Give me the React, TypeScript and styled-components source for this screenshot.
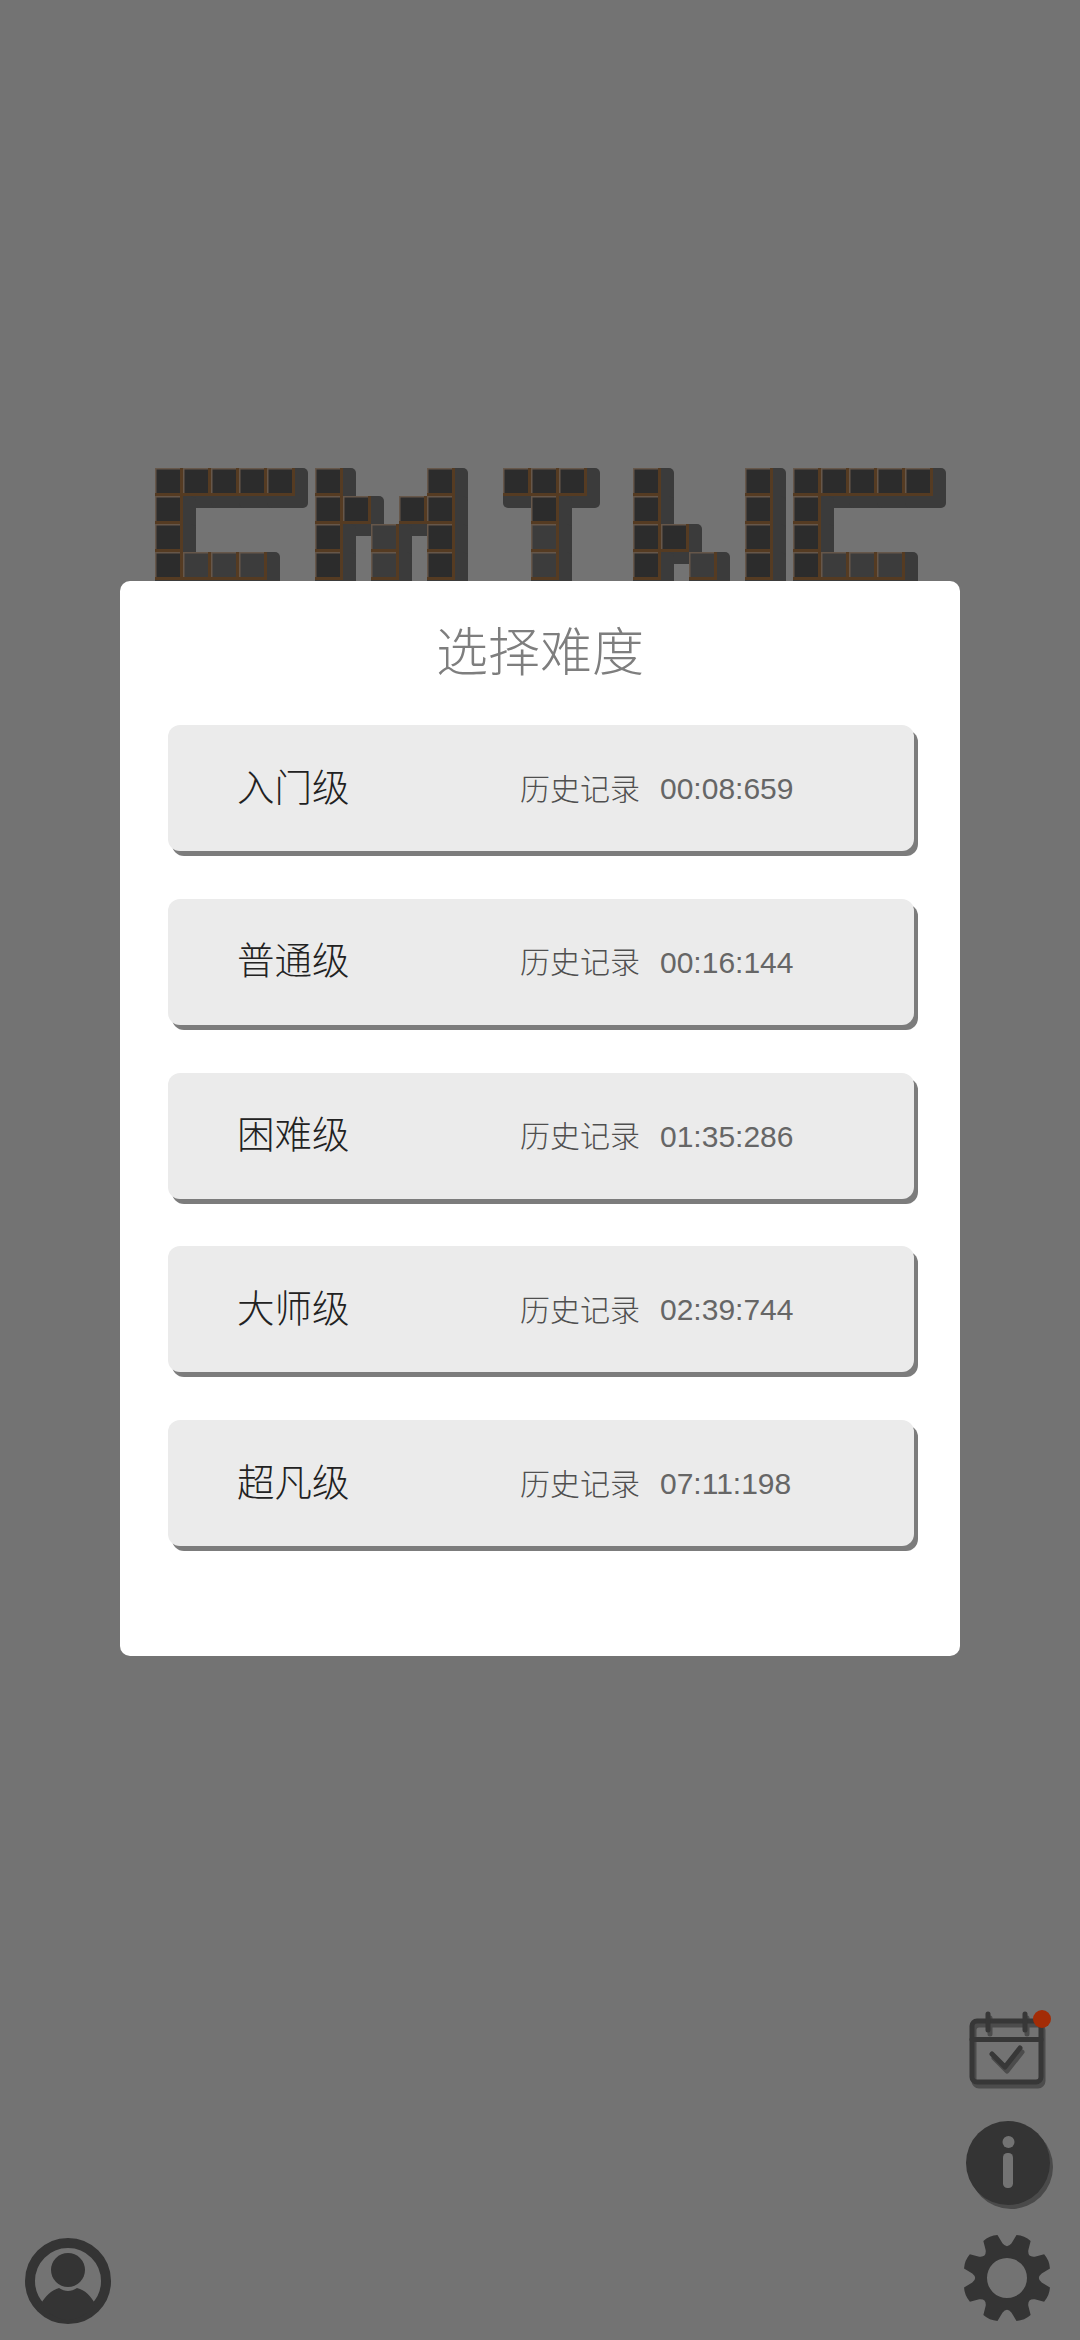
import React from "react";
import styled, { createGlobalStyle } from "styled-components";

const Reset = createGlobalStyle`
  html, body { margin: 0; padding: 0; background: #737373; }
  * { box-sizing: border-box; }
`;

const Page = styled.div`
  position: relative;
  width: 1080px;
  height: 2340px;
  overflow: hidden;
  display: flex;
  flex-direction: column;
  justify-content: space-between;
  background: #737373;
  font-family: "Liberation Sans", "Noto Sans CJK SC", sans-serif;
`;

const LogoArea = styled.div`
  padding: 464px 0 0 150px;
  line-height: 0;
`;

const Footer = styled.footer`
  display: flex;
  justify-content: space-between;
  align-items: flex-end;
  padding: 0 24px 16px 25px;
`;

const SideTools = styled.div`
  display: flex;
  flex-direction: column;
  gap: 20px;
`;

const IconSvg = styled.svg`
  display: block;
`;

const Scrim = styled.div`
  position: absolute;
  inset: 0;
  display: flex;
  justify-content: center;
  align-items: flex-start;
  padding-top: 581px;
`;

const Dialog = styled.section`
  width: 840px;
  height: 1075px;
  padding: 0 48px;
  background: #fff;
  border-radius: 10px;
`;

const DialogTitle = styled.h2`
  margin: 0;
  height: 144px;
  padding-top: 34px;
  text-align: center;
  font-size: 52px;
  line-height: 76px;
  font-weight: 300;
  color: #7e7e7e;
`;

const LevelList = styled.ul`
  list-style: none;
  margin: 0;
  padding: 0;
  display: flex;
  flex-direction: column;
  gap: 47.75px;
`;

const LevelCard = styled.li`
  height: 126px;
  width: 746px;
  display: flex;
  align-items: center;
  padding-left: 69px;
  background: #ebebeb;
  border-radius: 12px;
  box-shadow: 4px 5px 0 #7c7c7c;
`;

const LevelName = styled.span`
  width: 283px;
  margin-top: -8px;
  font-size: 37.5px;
  font-weight: 300;
  color: #222;
`;

const RecordLabel = styled.span`
  width: 140px;
  margin-top: -3px;
  font-size: 30px;
  font-weight: 300;
  color: #4f4f4f;
`;

const RecordTime = styled.span`
  margin-top: 2px;
  font-size: 30px;
  color: #666;
`;

const TILE = 28;
const CRATE_INNER = 23.5;

// Each glyph is a grid of crates: # a dark crate, + a paler one near the foot of the word.
const glyphs: { x: number; rows: string[] }[] = [
  { x: 5, rows: ["#####", "#", "#", "#+++"] },
  { x: 165, rows: ["#...#", "##.##", "#.+.#", "#.+.#"] },
  { x: 353, rows: ["###", ".#", ".+", ".+"] },
  { x: 483, rows: ["#...#", "#...#", "##..#", "#.+.#"] },
  { x: 643, rows: ["#####", "#", "#", "#+++"] },
];

function Logo() {
  const crates = glyphs.flatMap((g) =>
    g.rows.flatMap((row, r) =>
      [...row].flatMap((c, i) =>
        c === "." ? [] : [{ key: `${g.x}-${r}-${i}`, x: g.x + i * TILE, y: 4 + r * TILE, lit: c === "+" }]
      )
    )
  );
  return (
    <IconSvg width="810" height="140" viewBox="0 0 810 140">
      {/* Extruded side of each crate, running right and down from its own corner */}
      <g fill="#3b3b3b">
        {crates.map((t) => (
          <rect key={t.key} x={t.x} y={t.y} width={TILE + 13} height={TILE + 12} rx="5" />
        ))}
      </g>
      {crates.map((t) => (
        <g key={t.key}>
          <rect x={t.x} y={t.y} width={TILE} height={TILE} fill="#66574a" />
          <rect x={t.x + TILE - 3} y={t.y} width="3" height={TILE} fill="#553b22" />
          <rect x={t.x} y={t.y + TILE - 3} width={TILE} height="3" fill="#553b22" />
          <rect x={t.x + 1.5} y={t.y + 1.5} width={CRATE_INNER} height={CRATE_INNER} fill={t.lit ? "#3c3c3c" : "#2c2c2c"} />
        </g>
      ))}
    </IconSvg>
  );
}

function CalendarIcon() {
  const body = (
    <>
      <rect x="12" y="11" width="69" height="61" rx="5" />
      <path d="M28 4V20M65 4V20M32 44L45 57L60 38" />
    </>
  );
  return (
    <IconSvg width="96" height="84" viewBox="0 0 96 84">
      <g fill="none" strokeWidth="5" strokeLinecap="round" strokeLinejoin="round">
        <g stroke="#4c4c4c" transform="translate(2 4)">{body}</g>
        <g stroke="#373737">{body}</g>
        <path d="M12 29.5H81" stroke="#373737" />
      </g>
      <circle cx="82" cy="9" r="9" fill="#a32c06" />
    </IconSvg>
  );
}

function InfoIcon() {
  return (
    <IconSvg width="96" height="98" viewBox="0 0 96 98">
      <circle cx="51" cy="53" r="42" fill="#4a4a4a" />
      <circle cx="48" cy="49" r="42" fill="#343434" />
      <circle cx="48.5" cy="28" r="6" fill="#737373" />
      <rect x="43" y="39" width="10" height="35" rx="4.5" fill="#737373" />
    </IconSvg>
  );
}

// Builds the cog outline: eight rounded teeth joined by shallow scallops, with a round hole.
function gearPath(cx: number, cy: number) {
  const pt = (deg: number, r: number) => {
    const a = ((deg - 90) * Math.PI) / 180;
    return `${(cx + r * Math.cos(a)).toFixed(2)} ${(cy + r * Math.sin(a)).toFixed(2)}`;
  };
  let d = "";
  for (let k = 0; k < 8; k++) {
    const c = 22.5 + k * 45;
    d += `${k === 0 ? "M" : "L"}${pt(c - 15, 35)} L${pt(c - 10, 44)} Q${pt(c, 46)} ${pt(c + 10, 44)} L${pt(c + 15, 35)} Q${pt(c + 22.5, 29)} ${pt(c + 30, 35)} `;
  }
  d += `Z M${cx - 20} ${cy} a20 20 0 1 0 40 0 a20 20 0 1 0 -40 0 Z`;
  return d;
}

function GearIcon() {
  return (
    <IconSvg width="96" height="92" viewBox="0 0 96 92">
      <path d={gearPath(47, 46)} fill="#343434" fillRule="evenodd" />
    </IconSvg>
  );
}

function ProfileIcon() {
  return (
    <IconSvg width="88" height="88" viewBox="0 0 88 88">
      <circle cx="43" cy="45" r="38" fill="none" stroke="#343434" strokeWidth="10" />
      <circle cx="43" cy="34" r="17" fill="#343434" />
      <path d="M16 68C20 60 27 54 34 52C40 56 46 56 52 52C60 54 66 60 70 68C63 78 53 84 43 84C33 84 23 78 16 68Z" fill="#343434" />
    </IconSvg>
  );
}

const levels = [
  { name: "入门级", time: "00:08:659" },
  { name: "普通级", time: "00:16:144" },
  { name: "困难级", time: "01:35:286" },
  { name: "大师级", time: "02:39:744" },
  { name: "超凡级", time: "07:11:198" },
];

export default function App() {
  return (
    <Page>
      <Reset />
      <LogoArea>
        <Logo />
      </LogoArea>
      <Footer>
        <ProfileIcon />
        <SideTools>
          <CalendarIcon />
          <InfoIcon />
          <GearIcon />
        </SideTools>
      </Footer>
      <Scrim>
        <Dialog>
          <DialogTitle>选择难度</DialogTitle>
          <LevelList>
            {levels.map((l) => (
              <LevelCard key={l.name}>
                <LevelName>{l.name}</LevelName>
                <RecordLabel>历史记录</RecordLabel>
                <RecordTime>{l.time}</RecordTime>
              </LevelCard>
            ))}
          </LevelList>
        </Dialog>
      </Scrim>
    </Page>
  );
}
